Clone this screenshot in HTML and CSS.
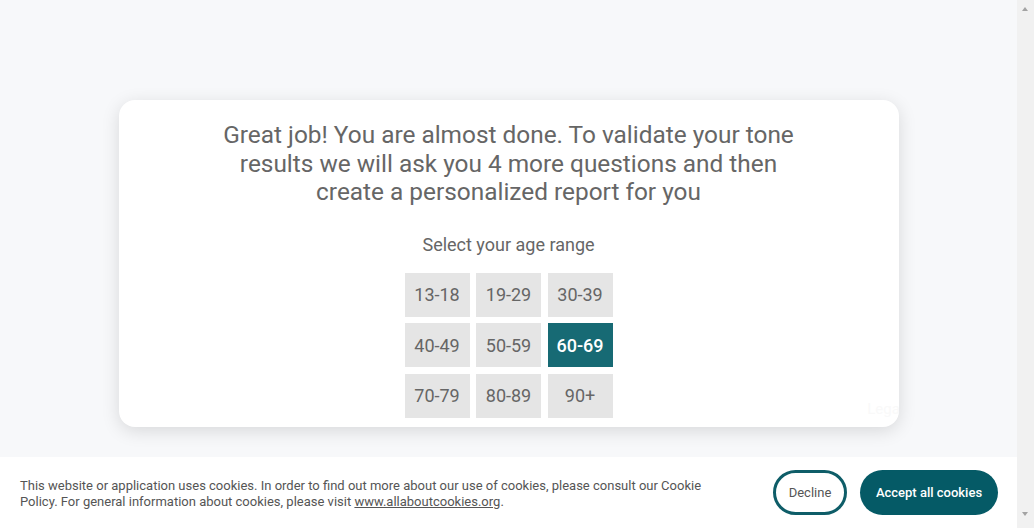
FILE: index.html
```html
<!DOCTYPE html>
<html lang="en">
<head>
<meta charset="utf-8">
<title>Age range</title>
<link rel="stylesheet" href="styles.css">
</head>
<body>
<main class="page">
  <section class="card">
    <h1 class="title">Great job! You are almost done. To validate your tone results we will ask you 4 more questions and then create a personalized report for you</h1>
    <p class="subtitle">Select your age range</p>
    <div class="ages">
      <button class="age">13-18</button>
      <button class="age">19-29</button>
      <button class="age">30-39</button>
      <button class="age">40-49</button>
      <button class="age">50-59</button>
      <button class="age age-active">60-69</button>
      <button class="age">70-79</button>
      <button class="age">80-89</button>
      <button class="age">90+</button>
    </div>
    <span class="legal">Legal</span>
  </section>
</main>
<div class="cookies">
  <p class="cookies-text">This website or application uses cookies. In order to find out more about our use of cookies, please consult our Cookie Policy. For general information about cookies, please visit <a href="#" class="cookies-link">www.allaboutcookies.org</a>.</p>
  <div class="cookies-actions">
    <button class="btn btn-outline">Decline</button>
    <button class="btn btn-solid">Accept all cookies</button>
  </div>
</div>
<div class="scrollbar" aria-hidden="true">
  <span class="sb-arrow sb-up"></span>
  <span class="sb-arrow sb-down"></span>
</div>
</body>
</html>
```

FILE: styles.css
```css
* { box-sizing: border-box; }
html {
  overflow: hidden;
}
html, body {
  margin: 0;
  padding: 0;
  background: #f7f8fa;
  font-family: Roboto, "Liberation Sans", Arial, sans-serif;
}
body {
  margin-right: 17px;
}
.page {
  padding: 100px 0 300px;
  display: flex;
  justify-content: center;
}
.card {
  position: relative;
  overflow: hidden;
  width: 780px;
  height: 327px;
  background: #fff;
  border-radius: 16px;
  box-shadow: 0 4px 18px rgba(0,0,0,0.13);
  padding: 21px 0 0;
  display: flex;
  flex-direction: column;
  align-items: center;
}
.title {
  margin: 0;
  width: 596px;
  font-size: 24.4px;
  line-height: 28.5px;
  font-weight: 400;
  color: #666;
  text-align: center;
}
.subtitle {
  margin: 26px 0 0;
  font-size: 18px;
  line-height: 24px;
  color: #666;
}
.ages {
  margin-top: 16px;
  display: grid;
  grid-template-columns: repeat(3, 65px);
  grid-auto-rows: 44px;
  column-gap: 6.5px;
  row-gap: 6.5px;
}
.age {
  border: 0;
  margin: 0;
  padding: 0;
  background: #e5e5e5;
  color: #666;
  font-family: inherit;
  font-size: 18px;
  cursor: pointer;
}
.age-active {
  background: #176a74;
  color: #fff;
  font-weight: 500;
}
.legal {
  position: absolute;
  right: -5px;
  bottom: 9px;
  font-size: 15px;
  color: #f9f9f9;
}
.cookies {
  position: fixed;
  left: 0;
  right: 17px;
  bottom: 0;
  height: 71px;
  background: #fff;
  display: flex;
  align-items: center;
  justify-content: space-between;
  padding: 0 19px 0 20px;
}
.cookies-text {
  margin: 2px 0 0;
  width: 700px;
  font-size: 13px;
  line-height: 16px;
  color: #555;
}
.cookies-link { color: #555; }
.cookies-actions {
  display: flex;
  gap: 13px;
}
.btn {
  height: 45px;
  border-radius: 23px;
  font-family: inherit;
  font-size: 13px;
  cursor: pointer;
}
.btn-outline {
  width: 74px;
  background: #fff;
  border: 3px solid #0e5d68;
  color: #555;
}
.btn-solid {
  width: 138px;
  background: #055a66;
  border: 0;
  color: #fff;
  font-weight: 500;
}
.scrollbar {
  position: fixed;
  top: 0;
  right: 0;
  bottom: 0;
  width: 17px;
  background: #f1f1f1;
}
.sb-arrow {
  position: absolute;
  left: 5px;
  width: 0;
  height: 0;
  border-left: 3.5px solid transparent;
  border-right: 3.5px solid transparent;
}
.sb-up {
  top: 7px;
  border-bottom: 4px solid #a3a3a3;
}
.sb-down {
  bottom: 12px;
  border-top: 4px solid #a3a3a3;
}
```
